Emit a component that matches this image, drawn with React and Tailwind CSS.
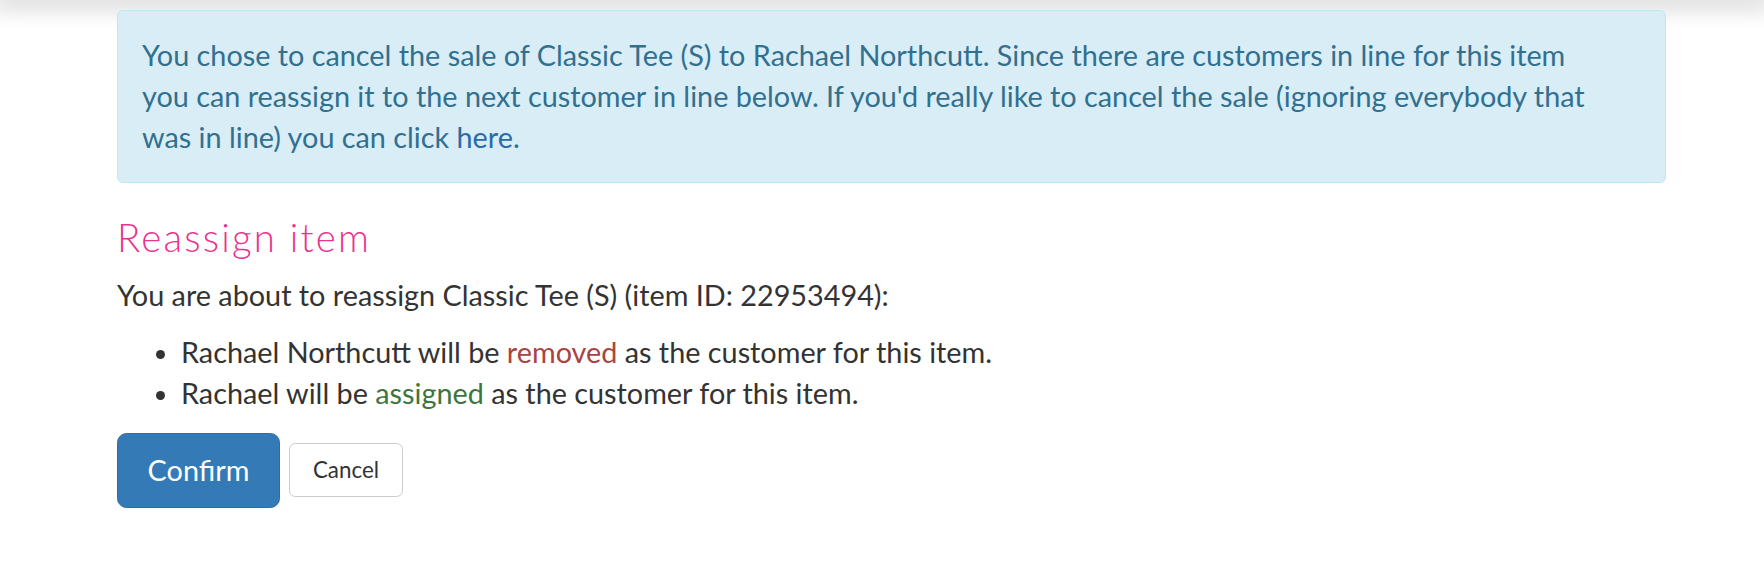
export default function App() {
  return (
    <div className="min-h-screen bg-white font-['Lato','Liberation_Sans',sans-serif] text-[28.8px] leading-[1.42857] text-[#333]">
      <div className="h-0 shadow-[0_0_22px_8px_rgba(0,0,0,0.18)]" />
      <div className="ml-[117px] w-[1549px] pt-[10px]">
        <div className="rounded-[6px] border-[1.6px] border-[#bce8f1] bg-[#d9edf7] pl-[24px] pr-[56px] py-[24px] text-[#31708f]">
          You chose to cancel the sale of Classic Tee (S) to Rachael Northcutt. Since there are customers in line for this item
          <br />
          you can reassign it to the next customer in line below. If you'd really like to cancel the sale (ignoring everybody that
          <br />
          was in line) you can click <a href="#" className="text-[#2a6ba6]">here</a>.
        </div>

        <h3 className="mt-[33px] mb-[16px] text-[38.4px] font-light leading-[1.1] tracking-[2.2px] text-[#e8338f]">Reassign item</h3>
        <p className="mb-[16px]">You are about to reassign Classic Tee (S) (item ID: 22953494):</p>
        <ul className="mb-[19px] list-disc pl-[64px]">
          <li>
            Rachael Northcutt will be <span className="text-[#a94442]">removed</span> as the customer for this item.
          </li>
          <li>
            Rachael will be <span className="text-[#3c763d]">assigned</span> as the customer for this item.
          </li>
        </ul>

        <div className="flex items-center gap-[9px]">
          <button className="h-[75px] w-[163px] rounded-[9.6px] border-[1.6px] border-[#2e6da4] bg-[#337ab7] text-[28.8px] text-white">
            Confirm
          </button>
          <button className="h-[54px] w-[114px] rounded-[6.4px] border-[1.6px] border-[#ccc] bg-white text-[22.4px] text-[#333]">
            Cancel
          </button>
        </div>
      </div>
    </div>
  )
}
